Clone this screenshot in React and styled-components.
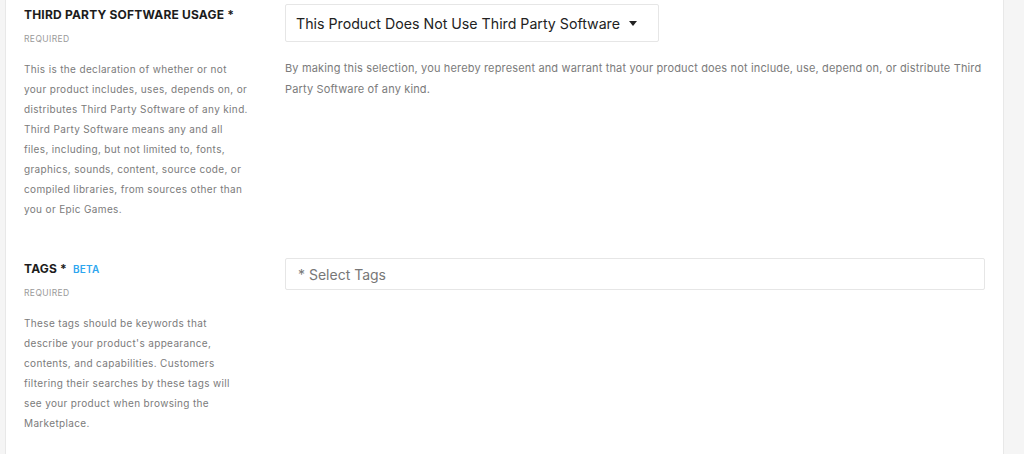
import React from "react";
import styled, { createGlobalStyle } from "styled-components";

const GlobalStyle = createGlobalStyle`
  html, body {
    margin: 0;
    padding: 0;
    background: #f5f5f5;
    font-family: Inter, "Noto Sans", sans-serif;
  }
`;

const Page = styled.div`
  display: flex;
  min-height: 454px;
  padding-left: 5px;
`;

const Panel = styled.div`
  width: 999px;
  background: #ffffff;
  border-left: 1px solid #e8e8e8;
  border-right: 1px solid #e8e8e8;
  padding: 4px 18px 0 18px;
  box-sizing: border-box;
  display: flex;
  flex-direction: column;
  gap: 39px;
`;

const Section = styled.div`
  display: grid;
  grid-template-columns: 228px 700px;
  column-gap: 33px;
`;

const Info = styled.div`
  display: flex;
  flex-direction: column;
`;

const Title = styled.div`
  font-size: 12px;
  font-weight: 700;
  line-height: 22px;
  color: #1c1c1c;
  letter-spacing: 0.2px;
  display: flex;
  align-items: center;
  gap: 6px;
`;

const Beta = styled.span`
  font-size: 10px;
  font-weight: 600;
  color: #2ea6ef;
  letter-spacing: 0.2px;
`;

const Required = styled.div`
  margin-top: 6px;
  font-size: 8.5px;
  line-height: 14px;
  color: #9a9a9a;
  letter-spacing: 0.4px;
`;

const Help = styled.p`
  margin: 13px 0 0;
  font-size: 10px;
  line-height: 20px;
  color: #7b7b7b;
  letter-spacing: 0.35px;
`;

const HelpLine = styled.span`
  display: block;
  white-space: nowrap;
`;

const Field = styled.div`
  display: flex;
  flex-direction: column;
`;

const Select = styled.div`
  width: 374px;
  height: 38px;
  box-sizing: border-box;
  border: 1px solid #e6e6e6;
  border-radius: 2px;
  display: flex;
  align-items: center;
  padding: 0 0 0 10px;
  gap: 9px;
  font-size: 14.2px;
  color: #222;
`;

const Caret = styled.span`
  width: 0;
  height: 0;
  border-left: 4.5px solid transparent;
  border-right: 4.5px solid transparent;
  border-top: 5px solid #222;
  margin-top: 1px;
`;

const Note = styled.p`
  margin: 16px 0 0;
  font-size: 11px;
  line-height: 21px;
  color: #7b7b7b;
  letter-spacing: 0.15px;
`;

const TagsInput = styled.div`
  height: 32px;
  box-sizing: border-box;
  border: 1px solid #e6e6e6;
  border-radius: 2px;
  display: flex;
  align-items: center;
  padding-left: 12px;
  font-size: 14px;
  color: #777;
`;

const thirdPartyHelp = [
  "This is the declaration of whether or not",
  "your product includes, uses, depends on, or",
  "distributes Third Party Software of any kind.",
  "Third Party Software means any and all",
  "files, including, but not limited to, fonts,",
  "graphics, sounds, content, source code, or",
  "compiled libraries, from sources other than",
  "you or Epic Games.",
];

const tagsHelp = [
  "These tags should be keywords that",
  "describe your product's appearance,",
  "contents, and capabilities. Customers",
  "filtering their searches by these tags will",
  "see your product when browsing the",
  "Marketplace.",
];

const HelpText = ({ lines }) => (
  <Help>
    {lines.map((line) => (
      <HelpLine key={line}>{line}</HelpLine>
    ))}
  </Help>
);

export default function App() {
  return (
    <>
      <GlobalStyle />
      <Page>
        <Panel>
          <Section>
            <Info>
              <Title>THIRD PARTY SOFTWARE USAGE *</Title>
              <Required>REQUIRED</Required>
              <HelpText lines={thirdPartyHelp} />
            </Info>
            <Field>
              <Select>
                This Product Does Not Use Third Party Software
                <Caret />
              </Select>
              <Note>
                By making this selection, you hereby represent and warrant that your
                product does not include, use, depend on, or distribute Third Party
                Software of any kind.
              </Note>
            </Field>
          </Section>
          <Section>
            <Info>
              <Title>
                TAGS * <Beta>BETA</Beta>
              </Title>
              <Required>REQUIRED</Required>
              <HelpText lines={tagsHelp} />
            </Info>
            <Field>
              <TagsInput>* Select Tags</TagsInput>
            </Field>
          </Section>
        </Panel>
      </Page>
    </>
  );
}
